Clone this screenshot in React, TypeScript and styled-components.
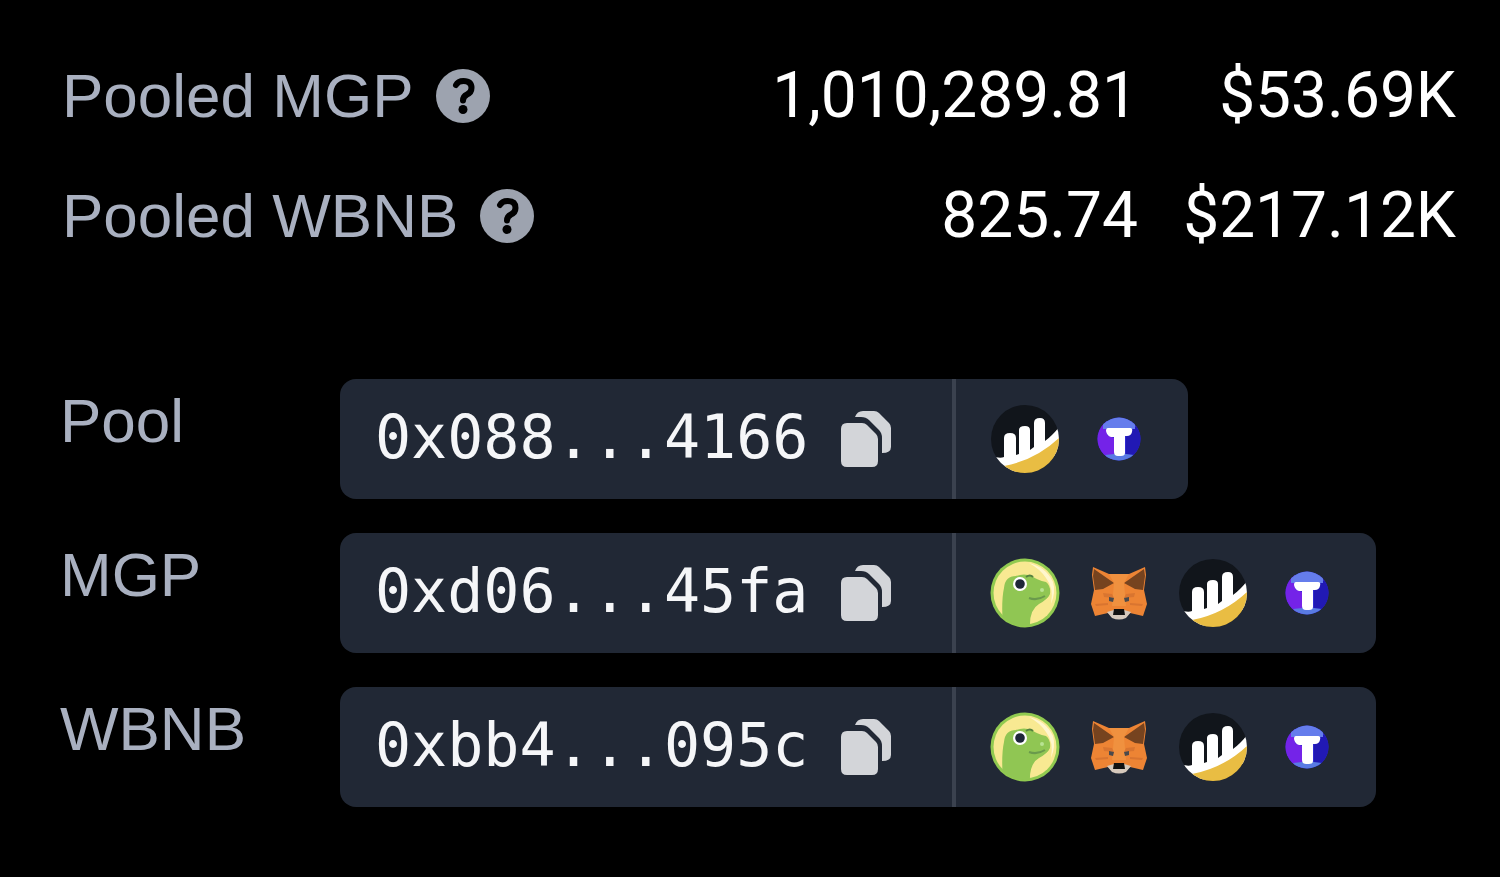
import React from "react";
import styled, { createGlobalStyle } from "styled-components";

const GlobalStyle = createGlobalStyle`
  *, *::before, *::after { box-sizing: border-box; }
  body {
    margin: 0;
    background: #000;
    color: #fff;
    font-family: "Liberation Sans", Arial, sans-serif;
    font-size: 62px;
    line-height: 80px;
  }
`;

const Panel = styled.main`
  padding: 36px 44px 64px 60px;
`;

const StatsTable = styled.table`
  width: 100%;
  border-collapse: collapse;
`;

const StatRow = styled.tr`
  height: 120px;
`;

const StatLabel = styled.th`
  padding: 0 0 0 2px;
  text-align: left;
  font-weight: 400;
  color: #a9b0c0;
  white-space: nowrap;
`;

const LabelContent = styled.div`
  display: flex;
  align-items: center;
  gap: 22px;
`;

const StatValue = styled.td<{ $width?: number }>`
  width: ${(p) => (p.$width ? `${p.$width}px` : "auto")};
  padding: 0;
  text-align: right;
  font-family: Roboto, "Liberation Sans", sans-serif;
  font-size: 64px;
  white-space: nowrap;
`;

const IconButton = styled.button<{ $color: string }>`
  display: flex;
  flex: none;
  padding: 0;
  border: 0;
  background: none;
  color: ${(p) => p.$color};
  cursor: pointer;
`;

const AddressList = styled.div`
  display: flex;
  flex-direction: column;
  gap: 34px;
  margin-top: 103px;
`;

const AddressRow = styled.div`
  display: flex;
  align-items: flex-start;
`;

const AddressLabel = styled.div`
  flex: none;
  width: 280px;
  padding-top: 2px;
  color: #a9b0c0;
`;

const Chip = styled.div`
  display: flex;
  height: 120px;
  border-radius: 16px;
  background: #212835;
`;

const AddressPart = styled.div`
  display: flex;
  align-items: center;
  gap: 33px;
  padding: 0 61px 0 35px;
  border-right: 4px solid #3b424f;
`;

const Address = styled.code`
  padding-bottom: 4px;
  font-family: "DejaVu Sans Mono", monospace;
  font-size: 60px;
  color: #f5f6f8;
`;

const LinkPart = styled.div`
  display: flex;
  padding: 0 22px;
`;

const WalletLink = styled.a`
  display: flex;
  align-items: center;
  justify-content: center;
  width: 94px;
`;

const HelpIcon = () => (
  <svg width="54" height="54" viewBox="0 0 54 54" aria-hidden="true">
    <circle cx="27" cy="27" r="27" fill="currentColor" />
    <path
      d="M20 16Q22 12 27.500 12Q35.500 12 35.500 19Q35.500 23.500 31 25.500Q27 27.500 27 31.500"
      fill="none"
      stroke="#000"
      strokeWidth="6"
      strokeLinecap="round"
    />
    <circle cx="27" cy="40.500" r="4.500" fill="#000" />
  </svg>
);

const CopyIcon = () => (
  <svg width="50" height="56" viewBox="0 0 50 56" fill="currentColor" aria-hidden="true">
    <path d="M6 12H21Q24 12 26 14L35 23Q37 25 37 28V50Q37 56 31 56H6Q0 56 0 50V18Q0 12 6 12Z" />
    <path d="M14 6Q16 0 22 0H33Q36 0 38 2L48 12Q50 14 50 17V36Q50 42 41 42V27Q41 22 38 19L28 9Q25 6 20 6Z" />
  </svg>
);

const ChartIcon = () => (
  <svg width="70" height="70" viewBox="0 0 70 70" aria-hidden="true">
    <clipPath id="chart-disc">
      <circle cx="35" cy="35" r="34" />
    </clipPath>
    <g clipPath="url(#chart-disc)">
      <path fill="#11151b" d="M0 0H70V70H0Z" />
      <path fill="#fff" d="M0 51Q9 55 14 53V34Q14 29 20 29Q26 29 26 34V51L29 50V26Q29 22 35 22Q40 22 40 26V46L44 43V19Q44 14 50 14Q55 14 55 19V37Q62 32 70 22V50L20 70H0Z" />
      <path fill="#e9bd43" d="M14 62Q46 56 70 33V70H14Z" />
    </g>
  </svg>
);

const TokenIcon = () => (
  <svg width="44" height="44" viewBox="0 0 44 44" aria-hidden="true">
    <clipPath id="token-disc">
      <circle cx="22" cy="22" r="21.500" />
    </clipPath>
    <g clipPath="url(#token-disc)">
      <path fill="#2f2ad0" d="M0 0H44V44H0Z" />
      <path fill="#7423e8" d="M0 0H10V18L17 21V44H0Z" />
      <path fill="#2119b4" d="M29 20L38 10H44V44H29Z" />
      <path fill="#657dec" d="M6 0H38V12H6Z" />
      <path fill="#597be3" d="M8 38L17 37H29L37 38L33 44H11Z" />
      <path fill="#fff" d="M11 11H33Q36 11 35 15Q34 19 30 19H28V36Q28 39 24 39H21Q17 39 17 35V20H14Q10 19 9 14Q9 11 11 11Z" />
    </g>
  </svg>
);

const GeckoIcon = () => (
  <svg width="70" height="70" viewBox="0 0 70 70" aria-hidden="true">
    <clipPath id="gecko-disc">
      <circle cx="35" cy="35" r="33" />
    </clipPath>
    <circle cx="35" cy="35" r="34.500" fill="#91ca50" />
    <circle cx="35" cy="35" r="31.500" fill="#f8e992" />
    <path d="M39 5Q56 9 63 24Q66 34 61 46Q64 30 56 20Q50 11 39 5Z" fill="#fff6ce" />
    <g clipPath="url(#gecko-disc)">
      <path fill="#90c653" d="M13 70Q11 43 14 30Q15 18 26 18Q34 15 42 18Q47 22 56 24Q61 28 60 36Q58 41 49 46Q39 52 40 70Z" />
    </g>
    <path d="M36 19Q40 16 43 19" stroke="#55813f" strokeWidth="2" fill="none" />
    <path d="M39 40Q47 43 55 38" stroke="#6a9a4c" strokeWidth="2" fill="none" />
    <circle cx="30" cy="26" r="7" fill="#fff" />
    <circle cx="30" cy="26" r="4.800" fill="#1e2739" />
    <circle cx="52" cy="32" r="2" fill="#b8e393" />
  </svg>
);

const FoxIcon = () => (
  <svg width="56" height="54" viewBox="0 0 56 54" aria-hidden="true">
    <path fill="#ed8434" d="M2 1L18 8H38L54 1L55 9L53 24L56 38L52 50L39 47L34 52H22L17 47L4 50L0 38L3 24L1 9Z" />
    <path fill="#76431f" d="M3 3L23 17L12 23L4 24L2 10ZM53 3L33 17L44 23L52 24L54 10Z" />
    <path fill="#f0913f" d="M18 8H38L33 17L35 40H21L23 17Z" />
    <path fill="#d97530" d="M12 27L21 28L23 32L13 31ZM44 27L35 28L33 32L43 31ZM4 38L17 37V39L5 40ZM52 38L39 37V39L51 40Z" />
    <path fill="#4a4a4c" d="M18 31L23 32L22 36L18 35ZM38 31L33 32L34 36L38 35Z" />
    <path fill="#d6c9bc" d="M16 46L23 44H33L40 46L35 52Q28 55 21 52Z" />
    <path fill="#111" d="M23 43H33L34 49H22Z" />
  </svg>
);

const wallets = {
  gecko: { name: "CoinGecko", Icon: GeckoIcon },
  fox: { name: "MetaMask", Icon: FoxIcon },
  chart: { name: "BscScan", Icon: ChartIcon },
  token: { name: "Token explorer", Icon: TokenIcon },
};

type WalletKey = keyof typeof wallets;

const stats = [
  { label: "Pooled MGP", amount: "1,010,289.81", value: "$53.69K" },
  { label: "Pooled WBNB", amount: "825.74", value: "$217.12K" },
];

const addresses: { label: string; address: string; links: WalletKey[] }[] = [
  { label: "Pool", address: "0x088...4166", links: ["chart", "token"] },
  { label: "MGP", address: "0xd06...45fa", links: ["gecko", "fox", "chart", "token"] },
  { label: "WBNB", address: "0xbb4...095c", links: ["gecko", "fox", "chart", "token"] },
];

export default function App() {
  return (
    <>
      <GlobalStyle />
      <Panel>
        <StatsTable>
          <tbody>
            {stats.map((s) => (
              <StatRow key={s.label}>
                <StatLabel scope="row">
                  <LabelContent>
                    {s.label}
                    <IconButton type="button" $color="#9da3af" aria-label={`About ${s.label}`}>
                      <HelpIcon />
                    </IconButton>
                  </LabelContent>
                </StatLabel>
                <StatValue>{s.amount}</StatValue>
                <StatValue $width={318}>{s.value}</StatValue>
              </StatRow>
            ))}
          </tbody>
        </StatsTable>
        <AddressList>
          {addresses.map((a) => (
            <AddressRow key={a.label}>
              <AddressLabel>{a.label}</AddressLabel>
              <Chip>
                <AddressPart>
                  <Address>{a.address}</Address>
                  <IconButton type="button" $color="#d3d5d9" aria-label={`Copy ${a.label} address`}>
                    <CopyIcon />
                  </IconButton>
                </AddressPart>
                <LinkPart>
                  {a.links.map((key) => {
                    const { name, Icon } = wallets[key];
                    return (
                      <WalletLink key={key} href="#" aria-label={`${a.label} on ${name}`}>
                        <Icon />
                      </WalletLink>
                    );
                  })}
                </LinkPart>
              </Chip>
            </AddressRow>
          ))}
        </AddressList>
      </Panel>
    </>
  );
}
